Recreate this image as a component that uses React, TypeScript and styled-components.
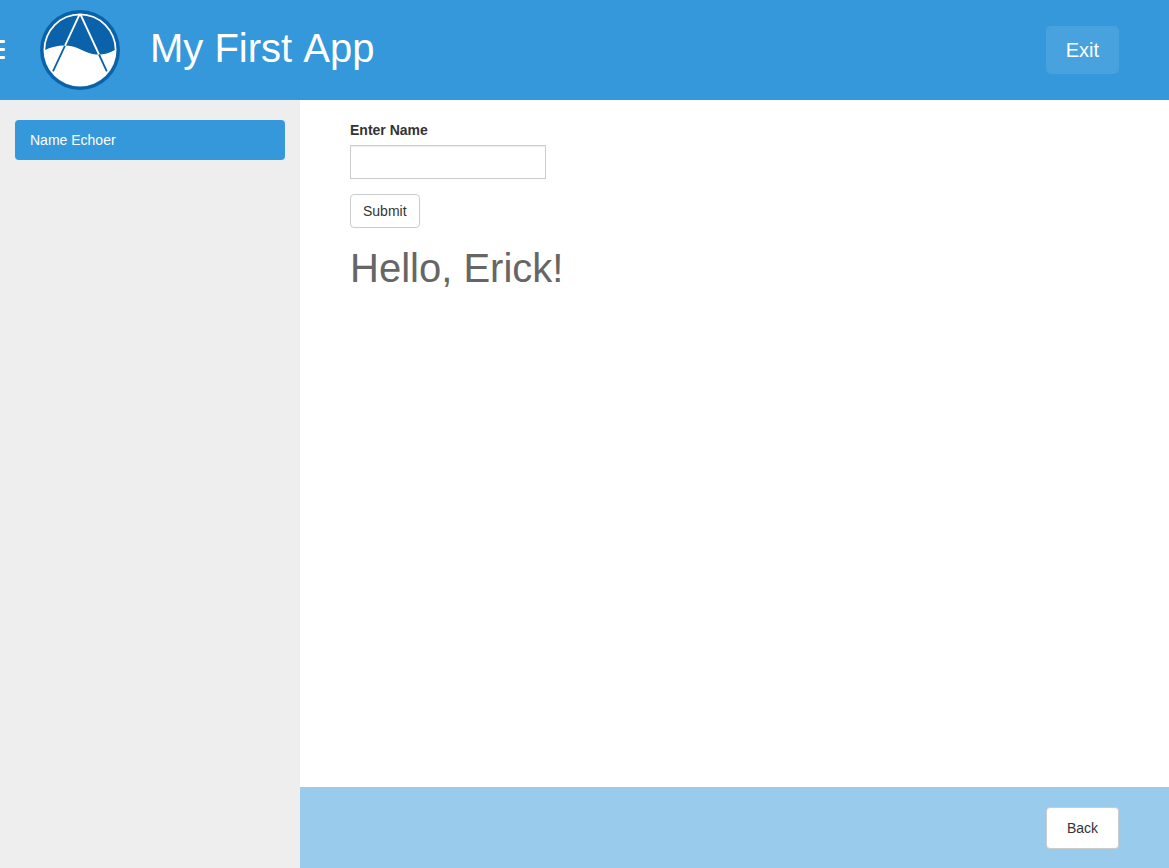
import React, { useState } from "react";
import styled, { createGlobalStyle } from "styled-components";

const GlobalStyle = createGlobalStyle`
  *, *::before, *::after {
    box-sizing: border-box;
  }
  body {
    margin: 0;
    background: #fff;
    color: #333;
    font: 14px/20px "Liberation Sans", Arial, sans-serif;
  }
`;

const Page = styled.div`
  display: flex;
  flex-direction: column;
  min-height: 100vh;
`;

const Header = styled.header`
  display: flex;
  align-items: center;
  height: 100px;
  padding-right: 50px;
  background: #3498db;
  color: #fff;
`;

const MenuToggle = styled.button`
  display: flex;
  flex-direction: column;
  gap: 5px;
  width: 5px;
  margin-right: 35px;
  padding: 0 0 2px;
  border: 0;
  background: none;
  cursor: pointer;
`;

const MenuBar = styled.span`
  width: 100%;
  height: 3px;
  border-radius: 0 1px 1px 0;
  background: #fff;
`;

const LogoImage = styled.svg`
  flex: none;
  width: 80px;
  height: 80px;
  margin-right: 30px;
`;

const Title = styled.h1`
  margin: 0;
  font-size: 40px;
  line-height: 44px;
  font-weight: 400;
  font-kerning: none;
`;

const AppTitle = styled(Title)`
  flex: 1;
  padding-bottom: 4px;
`;

const Greeting = styled(Title)`
  margin-top: 18px;
  color: #666;
`;

const Button = styled.button`
  padding: 6px 12px;
  border: 1px solid #ccc;
  border-radius: 4px;
  background: #fff;
  color: #333;
  font: inherit;
  cursor: pointer;
`;

const ExitButton = styled(Button)`
  padding: 10px 20px;
  border: 0;
  border-radius: 5px;
  background: rgba(255, 255, 255, 0.1);
  color: #fff;
  font-size: 20px;
  line-height: 28px;
`;

const BackButton = styled(Button)`
  padding: 10px 20px;
`;

const Body = styled.div`
  display: flex;
  flex: 1;
`;

const Sidebar = styled.nav`
  flex: none;
  width: 300px;
  padding: 20px 15px;
  background: #eee;
`;

const NavLink = styled.a`
  display: block;
  padding: 10px 15px;
  border-radius: 4px;
  background: #3498db;
  color: #fff;
  text-decoration: none;
`;

const Content = styled.div`
  display: flex;
  flex: 1;
  flex-direction: column;
`;

const Main = styled.main`
  flex: 1;
  padding: 20px 50px;
`;

const Form = styled.form`
  display: flex;
  flex-direction: column;
  align-items: flex-start;
`;

const Label = styled.label`
  margin-bottom: 5px;
  font-weight: 700;
`;

const TextInput = styled.input`
  width: 196px;
  height: 34px;
  margin-bottom: 15px;
  padding: 6px 12px;
  border: 1px solid #ccc;
  border-radius: 0;
  background: #fff;
  box-shadow: inset 0 1px 1px rgba(0, 0, 0, 0.075);
  color: #555;
  font: inherit;
`;

const Footer = styled.footer`
  display: flex;
  justify-content: flex-end;
  padding: 20px 50px 19px;
  background: #99cbed;
`;

function Logo() {
  return (
    <LogoImage viewBox="0 0 80 80" aria-hidden="true">
      <circle cx="40" cy="40" r="40" fill="#0a62aa" />
      <circle cx="40" cy="40" r="36.5" fill="#fff" />
      <path
        d="M5.2 40A34.8 34.8 0 0 1 40 5.2A34.8 34.8 0 0 1 74.8 40C66 45 58 45.8 49 43C40 40 35 35.6 25 35.6C17 35.6 11 37.4 5.2 40Z"
        fill="#0a62aa"
      />
      <path d="M39.5 4.5L24.9 35.8M40.5 4.5L59 44.5" stroke="#fff" strokeWidth="1.8" />
      <path d="M24.9 35.8L13 61.3M59 44.5L66.8 61.3" stroke="#0a62aa" strokeWidth="1.8" />
    </LogoImage>
  );
}

export default function App() {
  const [name, setName] = useState("");
  const [greeted, setGreeted] = useState("Erick");

  const submit = (event: React.FormEvent) => {
    event.preventDefault();
    setGreeted(name);
  };

  return (
    <Page>
      <GlobalStyle />
      <Header>
        <MenuToggle type="button" aria-label="Toggle menu">
          <MenuBar />
          <MenuBar />
          <MenuBar />
        </MenuToggle>
        <Logo />
        <AppTitle>My First App</AppTitle>
        <ExitButton type="button">Exit</ExitButton>
      </Header>
      <Body>
        <Sidebar>
          <NavLink href="#name-echoer">Name Echoer</NavLink>
        </Sidebar>
        <Content>
          <Main>
            <Form onSubmit={submit}>
              <Label htmlFor="name">Enter Name</Label>
              <TextInput
                id="name"
                type="text"
                value={name}
                onChange={(event) => setName(event.target.value)}
              />
              <Button type="submit">Submit</Button>
            </Form>
            <Greeting as="h2">Hello, {greeted}!</Greeting>
          </Main>
          <Footer>
            <BackButton type="button">Back</BackButton>
          </Footer>
        </Content>
      </Body>
    </Page>
  );
}
